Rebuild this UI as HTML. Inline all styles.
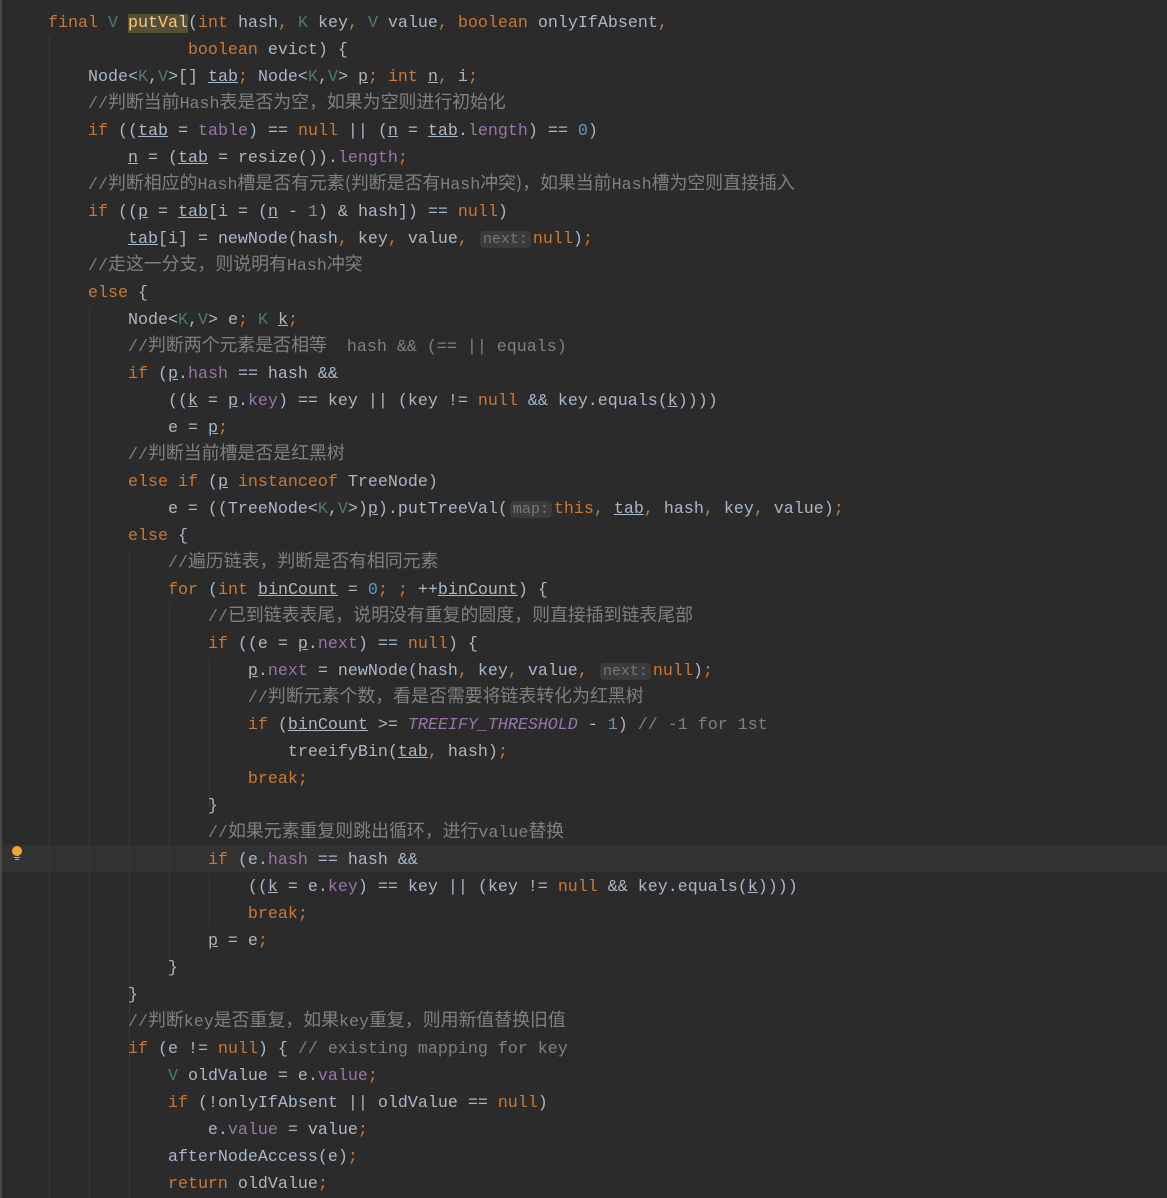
<!DOCTYPE html>
<html><head><meta charset="utf-8"><style>
html,body{margin:0;padding:0;background:#2b2b2b;width:1167px;height:1198px;overflow:hidden;position:relative}
pre{position:absolute;left:48px;top:10px;margin:0;font-family:"Liberation Mono","Noto Sans CJK SC",monospace;font-size:16.67px;line-height:27px;color:#a9b7c6;z-index:2}
.k{color:#cc7832}.f{color:#9876aa}.c{color:#808080}.g{color:#507874}.n{color:#6897bb}.u{text-decoration:underline}
.i{color:#9876aa;font-style:italic}.m{color:#ffc66d;background:#52503a}
.h{background:#3b3b3b;color:#787878;border-radius:4px;padding:0 3px;margin:0 2px;font-size:15px;line-height:0}
.z{font-size:17.9px;font-family:"Noto Sans CJK SC",sans-serif;line-height:0}
.guide{position:absolute;top:0;width:1px;background:#393939;z-index:1}
.hl{position:absolute;left:0;top:845px;width:1167px;height:27px;background:#323232;z-index:0}
.gut{position:absolute;left:0;top:0;width:2px;height:1198px;background:#4a4a4a}
</style></head><body>
<div class="hl"></div>
<div class="gut"></div>
<div class="guide" style="left:49px;top:36px;height:1162px"></div>
<div class="guide" style="left:89px;top:306px;height:892px"></div>
<div class="guide" style="left:129px;top:549px;height:649px"></div>
<div class="guide" style="left:169px;top:603px;height:360px"></div>
<div class="guide" style="left:209px;top:657px;height:150px"></div>
<div class="guide" style="left:209px;top:873px;height:54px"></div>
<div style="position:absolute;left:12px;top:846px;width:10px;height:10px;border-radius:50%;background:#f0a732;z-index:3"></div>
<div style="position:absolute;left:14px;top:857px;width:6px;height:1px;background:#f0a732;z-index:3"></div>
<div style="position:absolute;left:15px;top:859px;width:4px;height:1px;background:#f0a732;z-index:3"></div>
<pre><span class="k">final</span> <span class="g">V</span> <span class="m">putVal</span>(<span class="k">int</span> hash<span class="k">,</span> <span class="g">K</span> key<span class="k">,</span> <span class="g">V</span> value<span class="k">,</span> <span class="k">boolean</span> onlyIfAbsent<span class="k">,</span>
              <span class="k">boolean</span> evict) {
    Node&lt;<span class="g">K</span>,<span class="g">V</span>&gt;[] <span class="u">tab</span><span class="k">;</span> Node&lt;<span class="g">K</span>,<span class="g">V</span>&gt; <span class="u">p</span><span class="k">;</span> <span class="k">int</span> <span class="u">n</span><span class="k">,</span> i<span class="k">;</span>
    <span class="c">//<span class="z">判断当前</span>Hash<span class="z">表是否为空，如果为空则进行初始化</span></span>
    <span class="k">if</span> ((<span class="u">tab</span> = <span class="f">table</span>) == <span class="k">null</span> || (<span class="u">n</span> = <span class="u">tab</span>.<span class="f">length</span>) == <span class="n">0</span>)
        <span class="u">n</span> = (<span class="u">tab</span> = resize()).<span class="f">length</span><span class="k">;</span>
    <span class="c">//<span class="z">判断相应的</span>Hash<span class="z">槽是否有元素(判断是否有</span>Hash<span class="z">冲突)，如果当前</span>Hash<span class="z">槽为空则直接插入</span></span>
    <span class="k">if</span> ((<span class="u">p</span> = <span class="u">tab</span>[i = (<span class="u">n</span> - <span class="n">1</span>) &amp; hash]) == <span class="k">null</span>)
        <span class="u">tab</span>[i] = newNode(hash<span class="k">,</span> key<span class="k">,</span> value<span class="k">,</span> <span class="h">next:</span><span class="k">null</span>)<span class="k">;</span>
    <span class="c">//<span class="z">走这一分支，则说明有</span>Hash<span class="z">冲突</span></span>
    <span class="k">else</span> {
        Node&lt;<span class="g">K</span>,<span class="g">V</span>&gt; e<span class="k">;</span> <span class="g">K</span> <span class="u">k</span><span class="k">;</span>
        <span class="c">//<span class="z">判断两个元素是否相等</span>  hash &amp;&amp; (== || equals)</span>
        <span class="k">if</span> (<span class="u">p</span>.<span class="f">hash</span> == hash &amp;&amp;
            ((<span class="u">k</span> = <span class="u">p</span>.<span class="f">key</span>) == key || (key != <span class="k">null</span> &amp;&amp; key.equals(<span class="u">k</span>))))
            e = <span class="u">p</span><span class="k">;</span>
        <span class="c">//<span class="z">判断当前槽是否是红黑树</span></span>
        <span class="k">else if</span> (<span class="u">p</span> <span class="k">instanceof</span> TreeNode)
            e = ((TreeNode&lt;<span class="g">K</span>,<span class="g">V</span>&gt;)<span class="u">p</span>).putTreeVal(<span class="h">map:</span><span class="k">this,</span> <span class="u">tab</span><span class="k">,</span> hash<span class="k">,</span> key<span class="k">,</span> value)<span class="k">;</span>
        <span class="k">else</span> {
            <span class="c">//<span class="z">遍历链表，判断是否有相同元素</span></span>
            <span class="k">for</span> (<span class="k">int</span> <span class="u">binCount</span> = <span class="n">0</span><span class="k">;</span> <span class="k">;</span> ++<span class="u">binCount</span>) {
                <span class="c">//<span class="z">已到链表表尾，说明没有重复的圆度，则直接插到链表尾部</span></span>
                <span class="k">if</span> ((e = <span class="u">p</span>.<span class="f">next</span>) == <span class="k">null</span>) {
                    <span class="u">p</span>.<span class="f">next</span> = newNode(hash<span class="k">,</span> key<span class="k">,</span> value<span class="k">,</span> <span class="h">next:</span><span class="k">null</span>)<span class="k">;</span>
                    <span class="c">//<span class="z">判断元素个数，看是否需要将链表转化为红黑树</span></span>
                    <span class="k">if</span> (<span class="u">binCount</span> &gt;= <span class="i">TREEIFY_THRESHOLD</span> - <span class="n">1</span>) <span class="c">// -1 for 1st</span>
                        treeifyBin(<span class="u">tab</span><span class="k">,</span> hash)<span class="k">;</span>
                    <span class="k">break;</span>
                }
                <span class="c">//<span class="z">如果元素重复则跳出循环，进行</span>value<span class="z">替换</span></span>
                <span class="k">if</span> (e.<span class="f">hash</span> == hash &amp;&amp;
                    ((<span class="u">k</span> = e.<span class="f">key</span>) == key || (key != <span class="k">null</span> &amp;&amp; key.equals(<span class="u">k</span>))))
                    <span class="k">break;</span>
                <span class="u">p</span> = e<span class="k">;</span>
            }
        }
        <span class="c">//<span class="z">判断</span>key<span class="z">是否重复，如果</span>key<span class="z">重复，则用新值替换旧值</span></span>
        <span class="k">if</span> (e != <span class="k">null</span>) { <span class="c">// existing mapping for key</span>
            <span class="g">V</span> oldValue = e.<span class="f">value</span><span class="k">;</span>
            <span class="k">if</span> (!onlyIfAbsent || oldValue == <span class="k">null</span>)
                e.<span class="f">value</span> = value<span class="k">;</span>
            afterNodeAccess(e)<span class="k">;</span>
            <span class="k">return</span> oldValue<span class="k">;</span>
</pre>
</body></html>
